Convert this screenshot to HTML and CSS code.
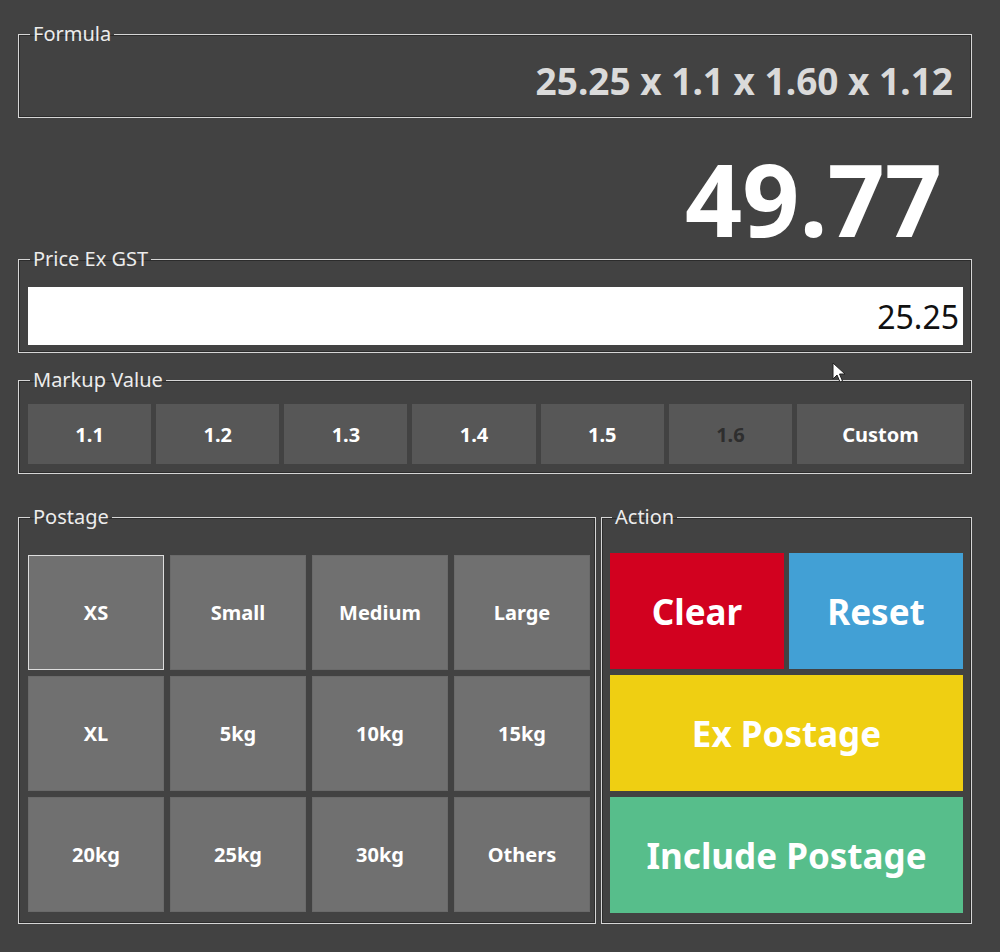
FILE: index.html
```html
<!DOCTYPE html>
<html lang="en">
<head>
  <meta charset="UTF-8">
  <title>Price Calculator</title>
  <link rel="stylesheet" href="styles.css">
</head>
<body>
  <div class="app">
    <fieldset class="group formula">
      <legend>Formula</legend>
      <div class="formula-value">25.25 x 1.1 x 1.60 x 1.12</div>
    </fieldset>

    <div class="result">49.77</div>

    <fieldset class="group price">
      <legend>Price Ex GST</legend>
      <input class="price-input" type="text" value="25.25">
    </fieldset>

    <fieldset class="group markup">
      <legend>Markup Value</legend>
      <div class="markup-row">
        <button class="mk">1.1</button>
        <button class="mk">1.2</button>
        <button class="mk">1.3</button>
        <button class="mk">1.4</button>
        <button class="mk">1.5</button>
        <button class="mk active">1.6</button>
        <button class="mk">Custom</button>
      </div>
    </fieldset>

    <div class="bottom">
      <fieldset class="group postage">
        <legend>Postage</legend>
        <div class="postage-grid">
          <button class="pst focused">XS</button>
          <button class="pst">Small</button>
          <button class="pst">Medium</button>
          <button class="pst">Large</button>
          <button class="pst">XL</button>
          <button class="pst">5kg</button>
          <button class="pst">10kg</button>
          <button class="pst">15kg</button>
          <button class="pst">20kg</button>
          <button class="pst">25kg</button>
          <button class="pst">30kg</button>
          <button class="pst">Others</button>
        </div>
      </fieldset>

      <fieldset class="group action">
        <legend>Action</legend>
        <div class="action-grid">
          <button class="act clear">Clear</button>
          <button class="act reset">Reset</button>
          <button class="act wide ex">Ex Postage</button>
          <button class="act wide inc">Include Postage</button>
        </div>
      </fieldset>
    </div>

    <svg class="cursor" width="14" height="22" viewBox="0 0 14 22">
      <path d="M1 1 L1 17 L5 13 L8 20 L10.5 19 L7.5 12 L13 12 Z" fill="#fff" stroke="#222" stroke-width="1"/>
    </svg>
  </div>
</body>
</html>
```

FILE: styles.css
```css
body {
  margin: 0;
  background-color: #424242;
  font-family: "Noto Sans", "Open Sans", sans-serif;
  color: #eee;
}
.app {
  position: relative;
  width: 954px;
  padding: 21px 0 0 18px;
}
.group {
  margin: 0;
  padding: 0 0 0 9px;
  border: 1px solid #d6d6d6;
  box-shadow: inset 0 0 0 1px #2c2c2c;
}
.group legend {
  margin-left: 2px;
  padding: 0 3px;
  font-size: 20px;
  line-height: 26px;
  color: #ececec;
}

.formula-value {
  height: 70px;
  line-height: 68px;
  padding-right: 18px;
  text-align: right;
  font-size: 37px;
  font-weight: bold;
  color: #dadada;
}

.result {
  height: 96px;
  padding-top: 32px;
  padding-right: 30px;
  line-height: 96px;
  text-align: right;
  font-size: 100px;
  font-weight: bold;
  color: #fff;
}

.price {
  padding: 15px 8px 7px 9px;
}
.price-input {
  display: block;
  width: 100%;
  box-sizing: border-box;
  height: 58px;
  border: none;
  margin: 0;
  padding: 0 4px;
  background: #fff;
  text-align: right;
  font-family: "Noto Sans", sans-serif;
  font-size: 32px;
  color: #111;
}

.markup {
  margin-top: 14px;
  padding: 11px 7px 9px 9px;
}
.markup-row {
  display: grid;
  grid-template-columns: repeat(6, 1fr) 167px;
  gap: 5px;
}
button {
  font-family: "Noto Sans", "Open Sans", sans-serif;
  font-weight: bold;
  color: #fff;
  border: none;
  margin: 0;
  cursor: pointer;
}
.mk {
  height: 60px;
  background: #575757;
  font-size: 20px;
}
.mk.active {
  color: #2e2e2e;
}

.bottom {
  display: flex;
  gap: 5px;
  margin-top: 30px;
}
.postage {
  width: 578px;
  box-sizing: border-box;
  height: 420px;
  padding: 25px 5px 10px 9px;
}
.postage-grid {
  display: grid;
  grid-template-columns: repeat(4, 1fr);
  grid-template-rows: repeat(3, 115px);
  gap: 6px;
}
.pst {
  background: #707070;
  font-size: 20px;
  border: 1px solid #6a6a6a;
}
.pst.focused {
  border-color: #dedede;
}

.action {
  flex: 1;
  height: 420px;
  box-sizing: border-box;
  padding: 23px 8px 10px 8px;
}
.action-grid {
  display: grid;
  grid-template-columns: 1fr 1fr;
  grid-template-rows: repeat(3, 116px);
  gap: 6px 5px;
}
.act {
  font-size: 35px;
}
.act.wide {
  grid-column: span 2;
}
.clear { background: #d2011f; }
.reset { background: #42a0d5; }
.ex { background: #efcf12; }
.inc { background: #57be8b; }

.cursor {
  position: absolute;
  left: 832px;
  top: 362px;
}
```
